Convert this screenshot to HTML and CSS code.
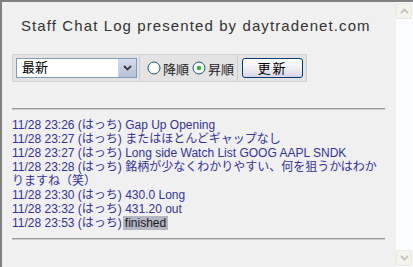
FILE: index.html
```html
<!DOCTYPE html>
<html lang="ja">
<head>
  <meta charset="UTF-8">
  <title>Staff Chat Log</title>
  <link rel="stylesheet" href="styles.css">
</head>
<body>
<div class="window">
  <div class="content">
    <h1 class="title">Staff Chat Log presented by daytradenet.com</h1>
    <div class="toolbar">
      <div class="cell cell-select">
        <div class="select">
          <span class="select-text">最新</span>
          <span class="select-arrow">
            <svg width="9" height="6" viewBox="0 0 9 6"><path d="M1 1 L4.5 4.5 L8 1" fill="none" stroke="#3a3a3a" stroke-width="1.8"/></svg>
          </span>
        </div>
      </div>
      <div class="cell cell-radios">
        <label class="radio">
          <svg width="14" height="14" viewBox="0 0 14 14"><circle cx="7" cy="7" r="6" fill="#fbfbfb" stroke="#1c5180" stroke-width="1"/></svg>
          <span>降順</span>
        </label>
        <label class="radio">
          <svg width="14" height="14" viewBox="0 0 14 14"><circle cx="7" cy="7" r="6" fill="#fbfbfb" stroke="#1c5180" stroke-width="1"/><circle cx="7" cy="7" r="2.3" fill="#3fb33f"/></svg>
          <span>昇順</span>
        </label>
      </div>
      <div class="cell cell-button">
        <button class="refresh">更新</button>
      </div>
    </div>
    <div class="rule"></div>
    <div class="log">
      <div>11/28 23:26 (はっち) Gap Up Opening</div>
      <div>11/28 23:27 (はっち) またはほとんどギャップなし</div>
      <div>11/28 23:27 (はっち) Long side Watch List GOOG AAPL SNDK</div>
      <div>11/28 23:28 (はっち) 銘柄が少なくわかりやすい、何を狙うかはわかりますね（笑）</div>
      <div>11/28 23:30 (はっち) 430.0 Long</div>
      <div>11/28 23:32 (はっち) 431.20 out</div>
      <div>11/28 23:53 (はっち)<span class="mark">finished</span></div>
    </div>
    <div class="rule"></div>
  </div>
  <div class="scrollbar">
    <div class="scroll-btn">
      <svg width="9" height="6" viewBox="0 0 9 6"><path d="M1 5 L4.5 1.5 L8 5" fill="none" stroke="#c4c2b8" stroke-width="1.8"/></svg>
    </div>
    <div class="scroll-btn">
      <svg width="9" height="6" viewBox="0 0 9 6"><path d="M1 1 L4.5 4.5 L8 1" fill="none" stroke="#c4c2b8" stroke-width="1.8"/></svg>
    </div>
  </div>
</div>
</body>
</html>
```

FILE: styles.css
```css
body { margin: 0; background: #f0f0f0; font-family: "Liberation Sans", "Noto Sans CJK JP", sans-serif; }
.window { width: 413px; height: 267px; box-sizing: border-box; display: flex; background: #f0f0f0; border-top: 2px solid #808080; border-left: 2px solid #808080; overflow: hidden; }
.content { flex: 1; padding: 0 11px 0 10px; }
.title { margin: 14px 0 0 9px; font-size: 15px; line-height: 20px; font-weight: normal; letter-spacing: 1.1px; color: #333; white-space: nowrap; }
.toolbar { display: flex; width: 295px; height: 28px; margin-top: 18px; box-sizing: border-box; border: 1px solid #d2d2d2; background: #e3e3e3; }
.cell { display: flex; align-items: center; box-sizing: border-box; }
.cell + .cell { border-left: 1px solid #cfcfcf; }
.cell-select { width: 126px; padding-left: 3px; }
.cell-radios { width: 98px; padding-left: 7px; gap: 3px; }
.cell-button { flex: 1; padding-left: 4px; }
.select { display: flex; width: 121px; height: 20px; box-sizing: border-box; border: 1px solid #7f9db9; background: #fff; }
.select-text { flex: 1; padding-left: 5px; font-size: 13px; line-height: 18px; color: #000; }
.select-arrow { width: 17px; display: flex; align-items: center; justify-content: center; background: linear-gradient(#d4dcec, #b4c0d8); border-left: 1px solid #c9d2e6; }
.radio { display: flex; align-items: center; gap: 2px; font-size: 13px; color: #222; }
.radio svg { display: block; }
.refresh { width: 61px; height: 20px; padding: 0; border: 1px solid #003c74; border-radius: 3px; background: linear-gradient(#ffffff, #ecebf2 60%, #d6d3e4); font-family: "Noto Sans CJK JP", sans-serif; font-size: 13px; line-height: 16px; color: #000; letter-spacing: 2px; }
.rule { height: 0; border-top: 1px solid #9a9a9a; border-bottom: 1px solid #cdcdcd; }
.toolbar + .rule { margin-top: 26px; }
.log { margin: 8px 0; font-size: 12px; line-height: 14px; color: #333399; }
.mark { background: #b3b5c2; color: #1a1a1a; padding: 0 2px; margin-left: 1px; }
.scrollbar { width: 17px; display: flex; flex-direction: column; justify-content: space-between; background: #fbfcfe; padding: 1px 0; }
.scroll-btn { width: 16px; height: 16px; box-sizing: border-box; border: 1px solid #ebe8dc; border-radius: 2px; background: #f4f3ee; display: flex; align-items: center; justify-content: center; }
```
